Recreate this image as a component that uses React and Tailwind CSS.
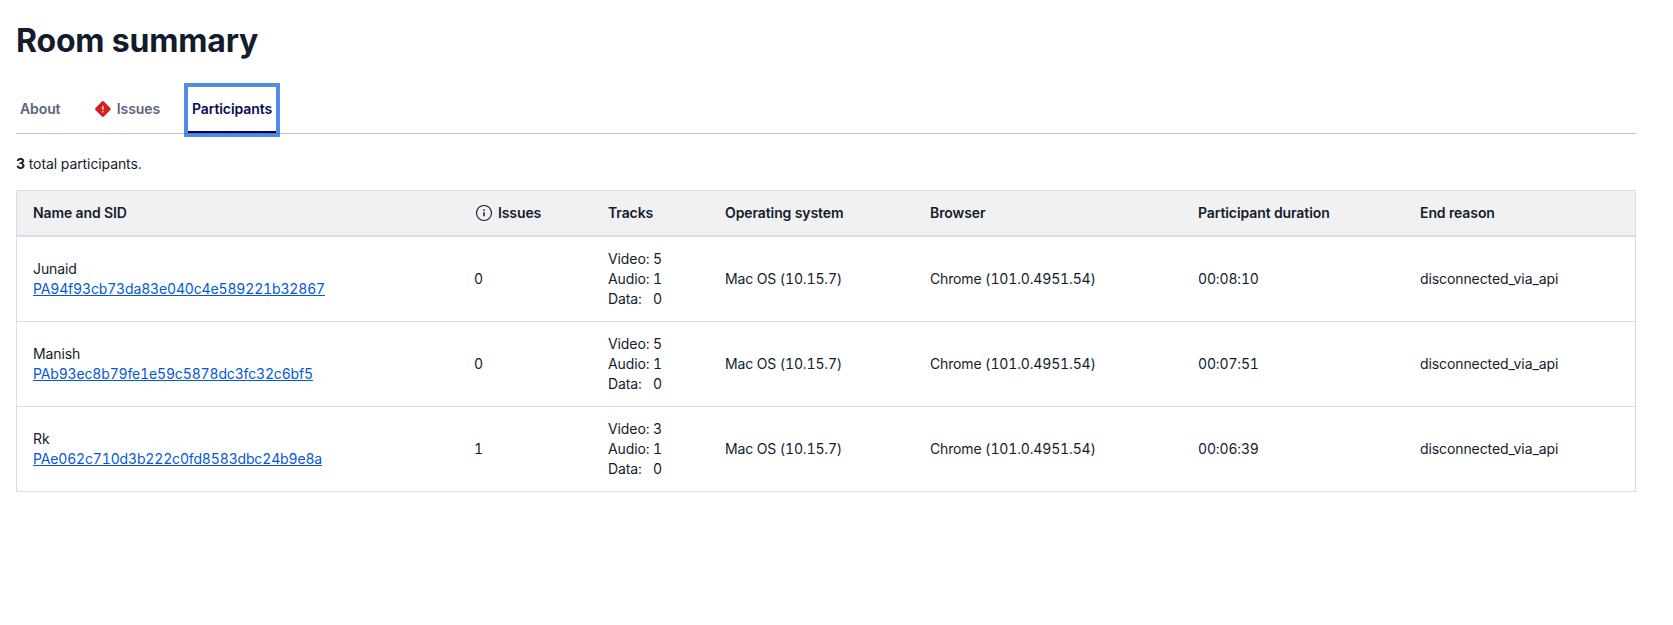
const participants = [
  { name: "Junaid", sid: "PA94f93cb73da83e040c4e589221b32867", issues: 0, video: 5, audio: 1, data: 0, duration: "00:08:10" },
  { name: "Manish", sid: "PAb93ec8b79fe1e59c5878dc3fc32c6bf5", issues: 0, video: 5, audio: 1, data: 0, duration: "00:07:51" },
  { name: "Rk", sid: "PAe062c710d3b222c0fd8583dbc24b9e8a", issues: 1, video: 3, audio: 1, data: 0, duration: "00:06:39" },
];

function ErrorIcon() {
  return (
    <svg className="size-5" viewBox="0 0 20 20" aria-hidden="true">
      <rect x="4" y="4" width="12" height="12" rx="1.4" transform="rotate(45 10 10)" fill="#d61f1f" />
      <path d="M10 7.4v2.9" stroke="#fff" strokeWidth="1.3" strokeLinecap="round" />
      <circle cx="10" cy="12.7" r="0.8" fill="#fff" />
    </svg>
  );
}

function InfoIcon() {
  return (
    <svg className="size-5" viewBox="0 0 20 20" fill="none" aria-hidden="true">
      <circle cx="10" cy="10" r="7.5" stroke="#121c2d" strokeWidth="1.1" />
      <path d="M10 9.3v3.9" stroke="#121c2d" strokeWidth="1.5" />
      <circle cx="10" cy="7.2" r="0.85" fill="#121c2d" />
    </svg>
  );
}

function Tabs() {
  return (
    <div role="tablist" className="mt-[29px] flex h-[47px] gap-6 border-b border-[#c0c2ce] font-semibold text-[#59647e]">
      <button role="tab" className="flex h-[46px] w-[49px] items-center px-1 pb-0.5">About</button>
      <button role="tab" className="flex h-[46px] w-[75px] items-center gap-1 px-1 pb-0.5">
        <ErrorIcon />
        Issues
      </button>
      <button
        role="tab"
        aria-selected="true"
        className="flex h-[46px] w-[88px] items-center border-b-2 border-[#06033a] px-1 text-[#060b56] shadow-[0_0_0_4px_rgba(2,87,222,0.69)]"
      >
        Participants
      </button>
    </div>
  );
}

function Track({ label, value }) {
  return (
    <div className="flex">
      <span className="w-[45px]">{label}:</span>
      <span>{value}</span>
    </div>
  );
}

function ParticipantsTable() {
  return (
    <table className="mt-4 w-full table-fixed border-separate border-spacing-0 border border-[#dadde5] text-left">
      <colgroup>
        <col className="w-[441px]" />
        <col className="w-[134px]" />
        <col className="w-[117px]" />
        <col className="w-[205px]" />
        <col className="w-[268px]" />
        <col className="w-[222px]" />
        <col />
      </colgroup>
      <thead className="bg-[#f1f1f4] [&_th]:border-b-2 [&_th]:border-[#dadde5] [&_th]:px-4 [&_th]:py-3 [&_th]:font-semibold">
        <tr>
          <th>Name and SID</th>
          <th>
            <div className="flex items-center gap-1">
              <InfoIcon />
              Issues
            </div>
          </th>
          <th>Tracks</th>
          <th>Operating system</th>
          <th>Browser</th>
          <th>Participant duration</th>
          <th>End reason</th>
        </tr>
      </thead>
      <tbody className="tabular-nums [&_td]:border-b [&_td]:border-[#dadde5] [&_td]:px-4 [&_td]:py-3 [&_tr:last-child_td]:border-b-0">
        {participants.map((p) => (
          <tr key={p.sid}>
            <td>
              <div>{p.name}</div>
              <a href="#" className="tracking-[-0.16px] text-[#0458d6] underline">{p.sid}</a>
            </td>
            <td>{p.issues}</td>
            <td>
              <Track label="Video" value={p.video} />
              <Track label="Audio" value={p.audio} />
              <Track label="Data" value={p.data} />
            </td>
            <td className="tracking-[-0.15px]">Mac OS (10.15.7)</td>
            <td className="tracking-[-0.15px]">Chrome (101.0.4951.54)</td>
            <td className="tracking-[-0.15px]">{p.duration}</td>
            <td>disconnected_via_api</td>
          </tr>
        ))}
      </tbody>
    </table>
  );
}

export default function App() {
  return (
    <main className="h-[625px] w-[1673px] bg-white pr-[37px] pl-4 pt-[18px] font-['Inter',sans-serif] text-sm leading-5 tracking-[-0.1px] text-[#121c2d]">
      <h1 className="h-10 text-[32px] leading-[46px] font-bold tracking-[-0.18px]">Room summary</h1>
      <Tabs />
      <p className="mt-5">
        <strong className="font-bold">3</strong> total participants.
      </p>
      <ParticipantsTable />
    </main>
  );
}
